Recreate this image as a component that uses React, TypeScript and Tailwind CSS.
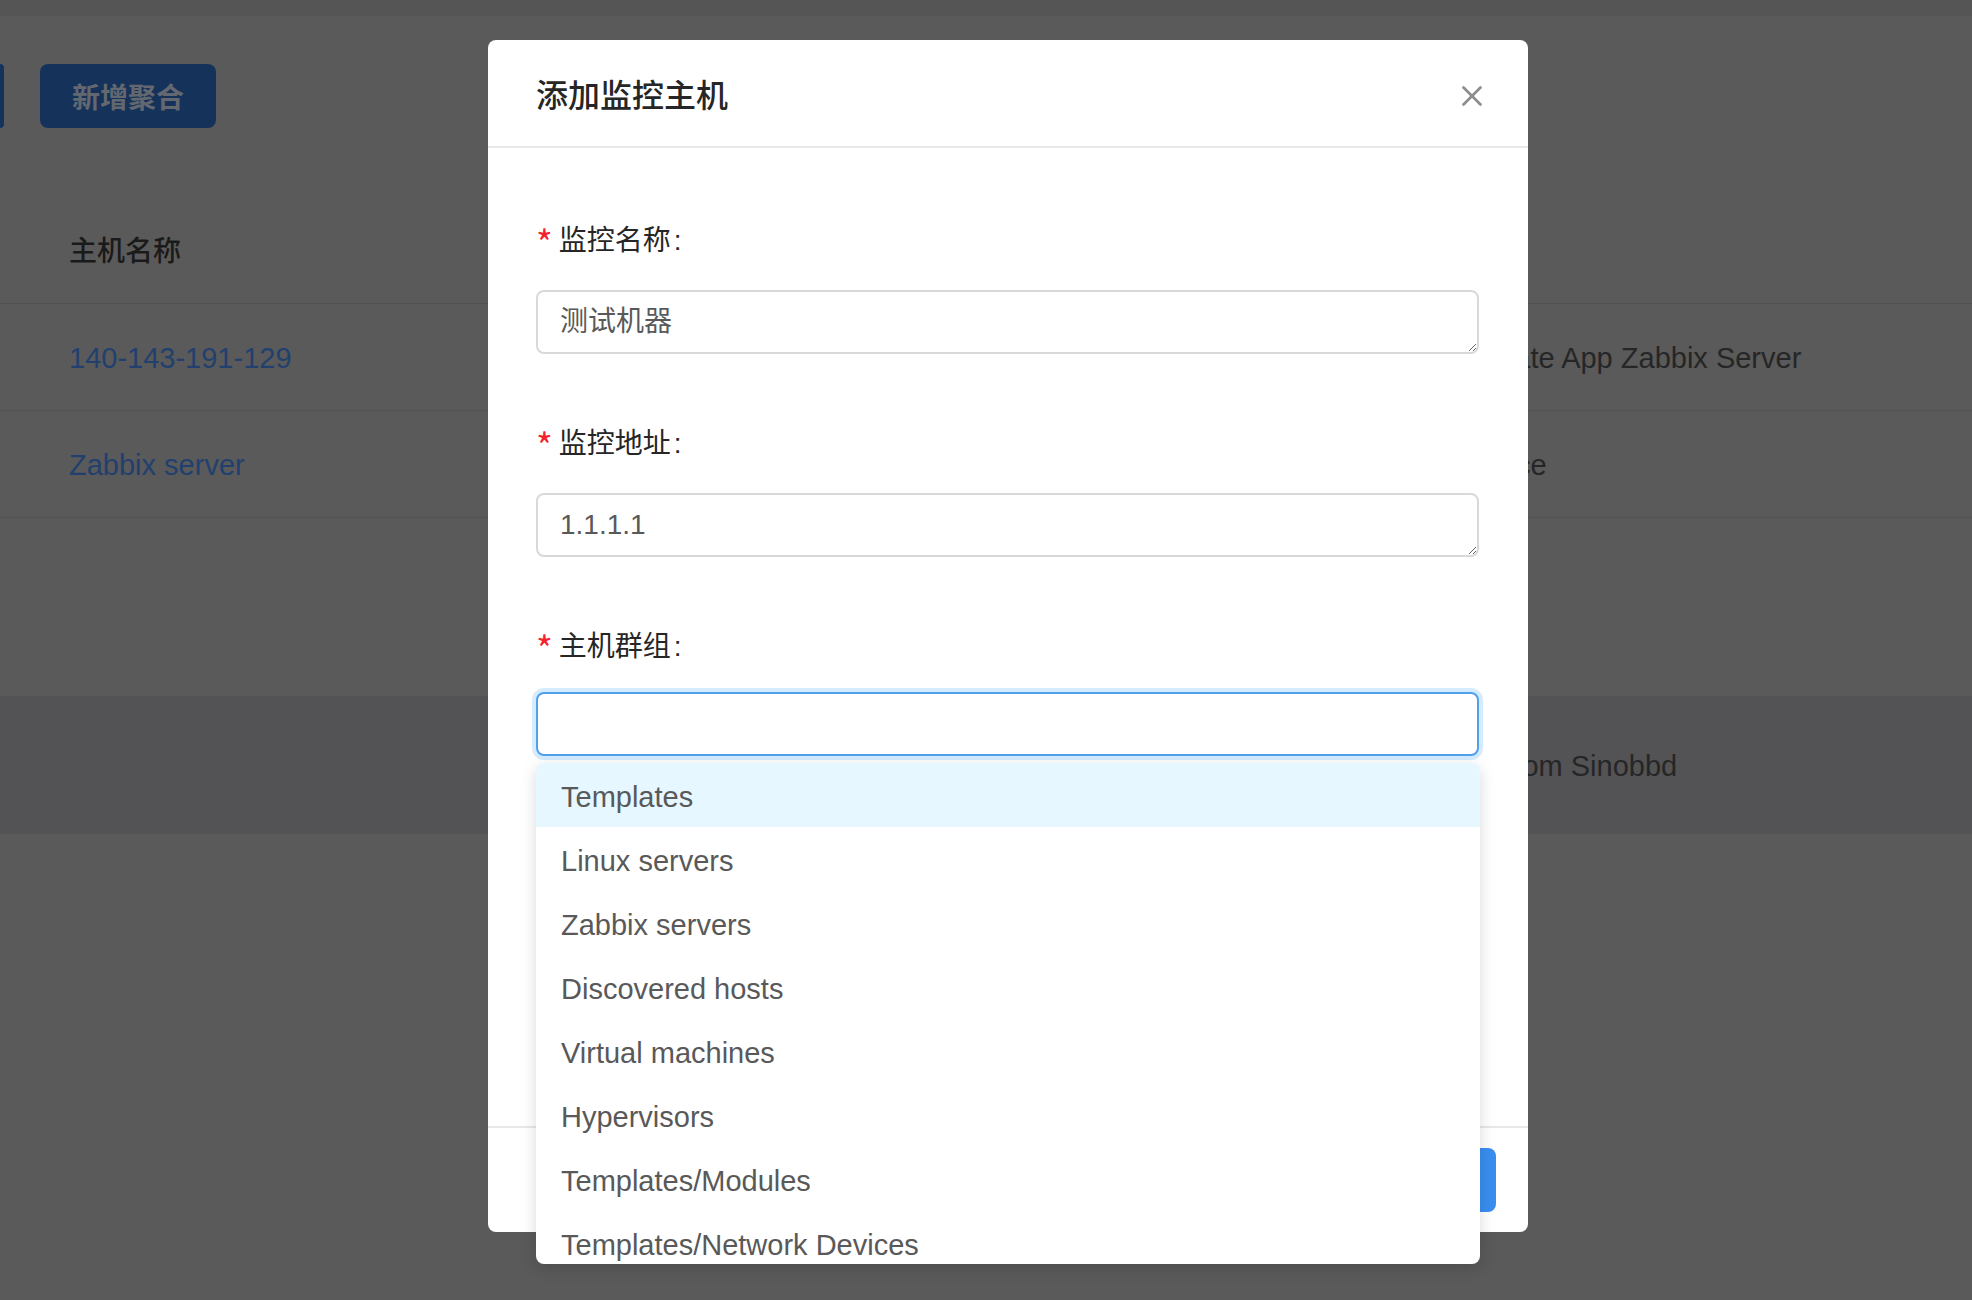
import React from "react";

const groups = [
  "Templates",
  "Linux servers",
  "Zabbix servers",
  "Discovered hosts",
  "Virtual machines",
  "Hypervisors",
  "Templates/Modules",
  "Templates/Network Devices",
];

function FieldLabel({ text, className = "" }: { text: string; className?: string }) {
  return (
    <div className={`flex h-[56px] items-center pt-[5px] text-[28px] text-[#262626] ${className}`}>
      <span className="mr-[6px] font-['Noto_Sans_CJK_SC',sans-serif] text-[36px] leading-none text-[#f5222d]">*</span>
      <span>{text}</span>
      <span className="ml-[3px]">:</span>
    </div>
  );
}

function TextField({ value }: { value: string }) {
  return (
    <textarea
      readOnly
      rows={1}
      defaultValue={value}
      className="block h-[64px] w-[943px] overflow-hidden rounded-[8px] border-2 border-[#d9d9d9] bg-white px-[22px] py-[10px] text-[28px] leading-[40px] text-[#595959] outline-none"
    />
  );
}

export default function App() {
  return (
    <div className="relative h-[1300px] w-[1972px] overflow-hidden bg-[#5a5a5a] font-['Liberation_Sans','Noto_Sans_CJK_SC',sans-serif]">
      {/* page behind the mask */}
      <div className="h-[16px] bg-[#555555]" />
      <div className="mt-[48px] flex items-center">
        <div className="h-[64px] w-[4px] rounded-r-[6px] bg-[#15325a]" />
        <div className="ml-[36px] flex h-[64px] w-[176px] items-center justify-center rounded-[8px] bg-[#15325a] pt-[5px] text-[28px] font-semibold text-[#636870]">
          新增聚合
        </div>
      </div>

      <div className="mt-[68px]">
        <div className="flex h-[108px] items-center border-b border-[#525252] pl-[69px] pt-[4px] text-[28px] font-medium text-[#1a1a1a]">
          主机名称
        </div>
        <div className="flex h-[107px] items-center border-b border-[#525252] pt-[4px] text-[29px]">
          <div className="w-[1437px] pl-[69px] text-[#22406e]">140-143-191-129</div>
          <div className="text-[#262626]">Template App Zabbix Server</div>
        </div>
        <div className="flex h-[107px] items-center border-b border-[#525252] pt-[4px] text-[29px]">
          <div className="w-[1437px] pl-[69px] text-[#22406e]">Zabbix server</div>
          <div className="text-[#262626]">Instance</div>
        </div>
        <div className="mt-[178px] flex h-[138px] items-center bg-[#535355] pt-[4px] text-[29px]">
          <div className="w-[1437px]" />
          <div className="text-[#262626]">Host from Sinobbd</div>
        </div>
      </div>

      {/* modal */}
      <div className="absolute inset-0">
        <div className="relative ml-[488px] mt-[40px] w-[1040px] rounded-[8px] bg-white">
          <div className="flex h-[108px] items-center justify-between border-b-2 border-[#e8e8e8] pl-[48px] pr-[46px] pt-[5px]">
            <div className="text-[32px] font-medium leading-[44px] text-[#262626]">添加监控主机</div>
            <svg width="20" height="20" viewBox="0 0 20 20" className="text-[#8c8c8c]">
              <path d="M1.5 1.5 L18.5 18.5 M18.5 1.5 L1.5 18.5" stroke="currentColor" strokeWidth="2.6" strokeLinecap="round" />
            </svg>
          </div>

          <div className="h-[978px] px-[48px] pt-[62px]">
            <FieldLabel text="监控名称" className="mb-[24px]" />
            <TextField value="测试机器" />

            <FieldLabel text="监控地址" className="mb-[24px] mt-[59px]" />
            <TextField value="1.1.1.1" />

            <FieldLabel text="主机群组" className="mb-[20px] mt-[59px]" />
            <div className="h-[64px] w-[943px] rounded-[8px] border-2 border-[#52a0ec] bg-white shadow-[0_0_0_4px_rgba(24,144,255,0.18)]" />
          </div>

          <div className="flex justify-end gap-[16px] border-t-2 border-[#e8e8e8] px-[32px] py-[20px]">
            <div className="flex h-[64px] items-center rounded-[8px] border-2 border-[#d9d9d9] px-[30px] text-[28px] text-[#595959]">
              取消
            </div>
            <div className="flex h-[64px] items-center rounded-[8px] bg-[#3a8ef0] px-[30px] text-[28px] text-white">
              确定
            </div>
          </div>

          {/* select dropdown */}
          <div className="absolute left-[48px] top-[723px] h-[501px] w-[944px] overflow-hidden rounded-[8px] bg-white shadow-[0_4px_16px_rgba(0,0,0,0.15)]">
            {groups.map((g, i) => (
              <div
                key={g}
                className={`flex h-[64px] items-center px-[25px] pt-[5px] text-[29px] text-[#595959] ${i === 0 ? "bg-[#e6f7ff]" : ""}`}
              >
                {g}
              </div>
            ))}
          </div>
        </div>
      </div>
    </div>
  );
}
